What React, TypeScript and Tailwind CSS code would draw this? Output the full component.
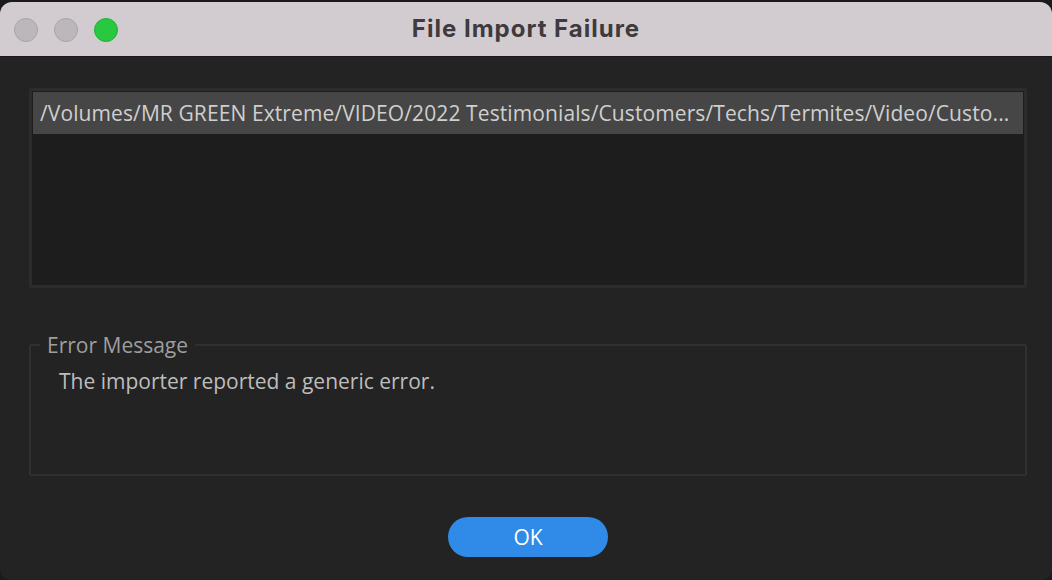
import React from "react";

export default function App() {
  const path =
    "/Volumes/MR GREEN Extreme/VIDEO/2022 Testimonials/Customers/Techs/Termites/Video/Custo...";
  return (
    <div className="w-[1052px] h-[580px] bg-[#1a1a1a] overflow-hidden" style={{ fontFamily: '"Open Sans", "Noto Sans", sans-serif' }}>
      <div className="mt-[2px] h-[578px] rounded-t-[12px] rounded-b-[10px] bg-[#232323] overflow-hidden flex flex-col">
        <div className="relative h-[55px] bg-[#d2ccd0] border-b border-[#1b1b1b] flex items-center justify-center shrink-0">
          <div className="absolute left-[14px] top-[16px] flex gap-[16px]">
            <div className="w-[24px] h-[24px] rounded-full bg-[#bcb7bb] border border-[#a9a4a8]" />
            <div className="w-[24px] h-[24px] rounded-full bg-[#bcb7bb] border border-[#a9a4a8]" />
            <div className="w-[24px] h-[24px] rounded-full bg-[#28c840] border border-[#22b037]" />
          </div>
          <div className="text-[24px] font-bold text-[#3e3a3d] tracking-[1px]" style={{ fontFamily: 'Inter, "Liberation Sans", sans-serif' }}>
            File Import Failure
          </div>
        </div>
        <div className="pl-[29px] pr-[25px] flex-1 flex flex-col">
          <div className="mt-[31px] h-[200px] bg-[#1d1d1d] border-[3px] border-[#2c2c2c] rounded-[3px] p-[1px]">
            <div className="h-[42px] bg-[#464646] flex items-center pl-[7px] pr-[4px]">
              <div className="whitespace-nowrap text-[21px] tracking-[0.1px] text-[#cfcfcf] leading-none">{path}</div>
            </div>
          </div>
          <fieldset className="mt-[45px] h-[143px] border-2 border-[#303030] rounded-[2px] pl-[9px] pr-[10px]">
            <legend className="px-[7px] text-[21px] text-[#9e9e9e] leading-[24px] -mt-[1px]">Error Message</legend>
            <div className="pl-[19px] mt-[12px] text-[21px] text-[#bdbdbd] leading-[24px]">The importer reported a generic error.</div>
          </fieldset>
          <div className="flex justify-center mt-[41px]">
            <button className="w-[160px] h-[40px] rounded-full bg-[#2f8ae8] text-white text-[21px] leading-none">OK</button>
          </div>
        </div>
      </div>
    </div>
  );
}
